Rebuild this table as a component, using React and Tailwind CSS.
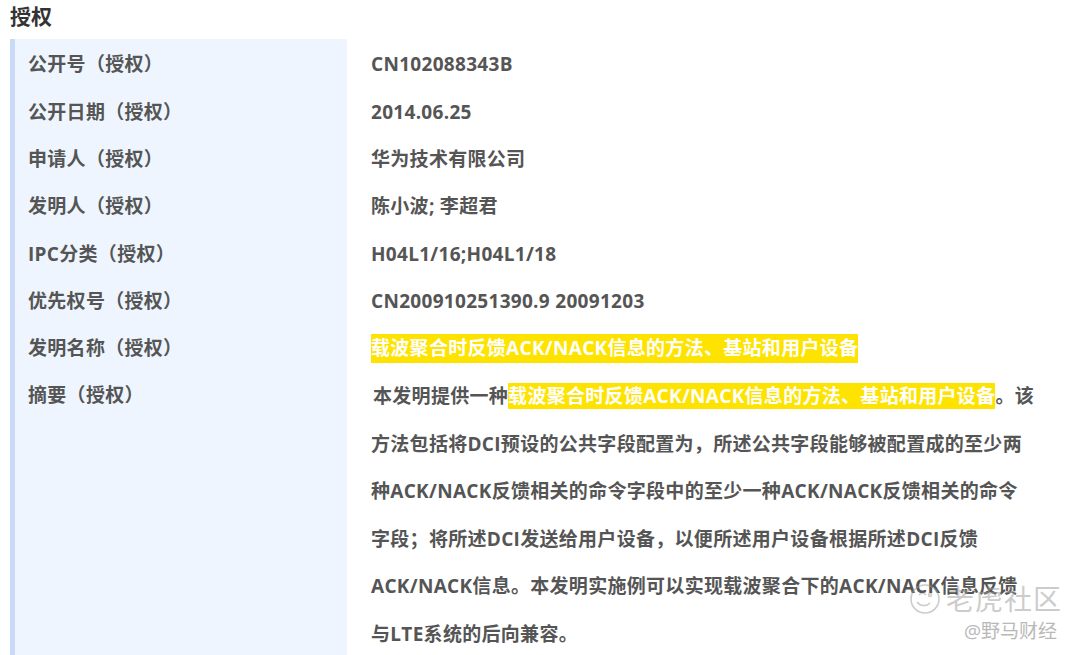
import React from 'react'

const rows = [
  ['公开号（授权）', 'CN102088343B'],
  ['公开日期（授权）', '2014.06.25'],
  ['申请人（授权）', '华为技术有限公司'],
  ['发明人（授权）', '陈小波; 李超君'],
  ['IPC分类（授权）', 'H04L1/16;H04L1/18'],
  ['优先权号（授权）', 'CN200910251390.9 20091203'],
]

const title = '载波聚合时反馈ACK/NACK信息的方法、基站和用户设备'

function Mark({ children }) {
  return <span className="bg-[#ffe300] text-white">{children}</span>
}

export default function App() {
  return (
    <div
      className="relative h-[655px] w-[1080px] overflow-hidden bg-white text-[19px] font-bold tracking-[0.3px] text-[#555]"
      style={{ fontFamily: '"Open Sans", "Noto Sans CJK SC", sans-serif' }}
    >
      <h2 className="flex h-[39px] items-center pl-[10px] pb-[6px] text-[21px] font-bold tracking-normal text-[#333]">授权</h2>

      <div className="ml-[10px] flex">
        <div className="w-[337px] shrink-0 border-l-[5px] border-[#c8daf6] bg-[#eef5fe] pl-[13px] pt-[2px]">
          {rows.map(([k]) => (
            <div key={k} className="flex h-[47.3px] items-center">{k}</div>
          ))}
          <div className="flex h-[47.3px] items-center">发明名称（授权）</div>
          <div className="flex h-[47.3px] items-center">摘要（授权）</div>
          <div className="h-[260px]" />
        </div>

        <div className="flex-1 pl-[24px] pt-[2px]">
          {rows.map(([k, v]) => (
            <div key={k} className="flex h-[47.3px] items-center">{v}</div>
          ))}
          <div className="flex h-[47.3px] items-center">
            <Mark>{title}</Mark>
          </div>
          <div className="pt-[1px] leading-[47.5px] whitespace-nowrap">
            <div className="pl-[2px]">本发明提供一种<Mark>{title}</Mark>。该</div>
            <div>方法包括将DCI预设的公共字段配置为，所述公共字段能够被配置成的至少两</div>
            <div>种ACK/NACK反馈相关的命令字段中的至少一种ACK/NACK反馈相关的命令</div>
            <div>字段；将所述DCI发送给用户设备，以便所述用户设备根据所述DCI反馈</div>
            <div>ACK/NACK信息。本发明实施例可以实现载波聚合下的ACK/NACK信息反馈</div>
            <div>与LTE系统的后向兼容。</div>
          </div>
        </div>
      </div>

      <div className="pointer-events-none absolute left-[908px] top-[578px] flex items-center gap-[4px] text-[#9a9a9a] opacity-50">
        <svg width="34" height="34" viewBox="0 0 34 34" fill="none" stroke="currentColor" strokeWidth="1.6">
          <circle cx="17" cy="17" r="14" />
          <path d="M9 20c3 4 9 5 13 1" />
          <path d="M11 13c2-2 5-2 7 0" />
          <circle cx="22" cy="13" r="1.5" />
        </svg>
        <span className="text-[28px] font-normal tracking-[1px]">老虎社区</span>
      </div>
      <div className="pointer-events-none absolute left-[964px] top-[617px] text-[19px] font-normal tracking-normal text-[#a8a8a8] opacity-80">
        @野马财经
      </div>
    </div>
  )
}
